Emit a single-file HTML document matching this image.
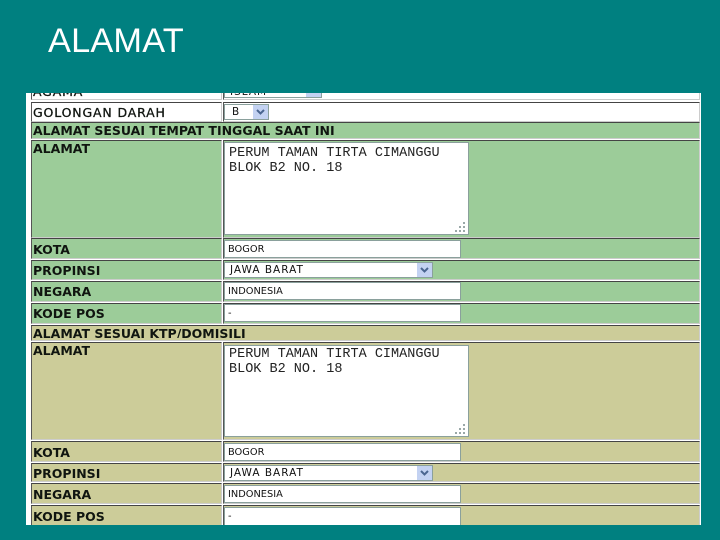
<!DOCTYPE html>
<html><head><meta charset="utf-8">
<style>
html,body{margin:0;padding:0}
body{width:720px;height:540px;background:#008080;position:relative;overflow:hidden;font-family:"DejaVu Sans","Liberation Sans",sans-serif}
#t{position:absolute;left:48px;top:22px;font:34.3px/38px "Liberation Sans",sans-serif;color:#fff;letter-spacing:.2px}
#p{position:absolute;left:26px;top:93px;width:675px;height:432px;background:#fff;overflow:hidden;filter:blur(.25px)}
.c{position:absolute;box-sizing:border-box;border-top:1px solid #444;border-left:1px solid #555;border-bottom:1px solid #ccc;border-right:1px solid #ccc}
.g{background:#9ccc99}.k{background:#cccc99}.w{background:#fff}
.l{position:absolute;font-size:12.5px;font-weight:700;color:#101510;white-space:nowrap;overflow:hidden}
.n{font-weight:400;letter-spacing:.85px;-webkit-text-stroke:.3px #101510}
.i{position:absolute;box-sizing:border-box;background:#fff;border:1px solid #8aa09c;font-size:9.8px;line-height:18px;color:#111;padding-left:3px;white-space:nowrap;overflow:hidden}
.s{position:absolute;box-sizing:border-box;background:#fff;border:1px solid #8aa09c;font-size:10.5px;line-height:15px;color:#111;padding-left:5px;letter-spacing:1px;white-space:nowrap;overflow:hidden}
.b{position:absolute;right:0;top:0;bottom:0;width:15px;background:#c3d2f2}
.b svg{position:absolute;left:2px;top:3px}
.a{position:absolute;box-sizing:border-box;background:#fff;border:1px solid #8aa09c;font:13.5px/15px "Liberation Mono",monospace;color:#222;padding:3px 0 0 4px;white-space:pre;overflow:hidden}
.r{position:absolute;width:12px;height:12px;right:1px;bottom:1px}
</style></head><body>
<div id="t">ALAMAT</div>
<div id="p">
<div class="c w" style="left:5px;top:-12px;width:191px;height:19px"></div>
<div class="c w" style="left:197px;top:-12px;width:477px;height:19px"></div>
<div class="l n" style="left:7px;top:-9px;height:14px">AGAMA</div>
<div class="s" style="left:198px;top:-9px;width:98px;height:14px">ISLAM<div class="b"></div></div>

<div class="c w" style="left:5px;top:9px;width:191px;height:20px"></div>
<div class="c w" style="left:197px;top:9px;width:477px;height:20px"></div>
<div class="l n" style="left:7px;top:12px">GOLONGAN DARAH</div>
<div class="s" style="left:198px;top:11px;width:45px;height:16px;padding-left:7px">B<div class="b"><svg width="11" height="9" viewBox="0 0 11 9"><path d="M2 2l3.5 3.5L9 2" fill="none" stroke="#4a6590" stroke-width="2"/></svg></div></div>

<div class="c g" style="left:5px;top:29px;width:669px;height:17px"></div>
<div class="l" style="left:7px;top:30px">ALAMAT SESUAI TEMPAT TINGGAL SAAT INI</div>

<div class="c g" style="left:5px;top:47px;width:191px;height:98px"></div>
<div class="c g" style="left:197px;top:47px;width:477px;height:98px"></div>
<div class="l" style="left:7px;top:48px">ALAMAT</div>
<div class="a" style="left:198px;top:49px;width:245px;height:93px">PERUM TAMAN TIRTA CIMANGGU
BLOK B2 NO. 18<svg class="r" viewBox="0 0 12 12"><path d="M8 1h2v2H8zM4 5h2v2H4zM8 5h2v2H8zM0 9h2v2H0zM4 9h2v2H4zM8 9h2v2H8z" fill="#9aa8a8"/></svg></div>

<div class="c g" style="left:5px;top:145px;width:191px;height:21px"></div>
<div class="c g" style="left:197px;top:145px;width:477px;height:21px"></div>
<div class="l" style="left:7px;top:149px">KOTA</div>
<div class="i" style="left:198px;top:147px;width:237px;height:18px">BOGOR</div>

<div class="c g" style="left:5px;top:167px;width:191px;height:20px"></div>
<div class="c g" style="left:197px;top:167px;width:477px;height:20px"></div>
<div class="l" style="left:7px;top:170px">PROPINSI</div>
<div class="s" style="left:198px;top:169px;width:209px;height:16px">JAWA BARAT<div class="b"><svg width="11" height="9" viewBox="0 0 11 9"><path d="M2 2l3.5 3.5L9 2" fill="none" stroke="#4a6590" stroke-width="2"/></svg></div></div>

<div class="c g" style="left:5px;top:188px;width:191px;height:21px"></div>
<div class="c g" style="left:197px;top:188px;width:477px;height:21px"></div>
<div class="l" style="left:7px;top:191px">NEGARA</div>
<div class="i" style="left:198px;top:189px;width:237px;height:18px">INDONESIA</div>

<div class="c g" style="left:5px;top:210px;width:191px;height:21px"></div>
<div class="c g" style="left:197px;top:210px;width:477px;height:21px"></div>
<div class="l" style="left:7px;top:213px">KODE POS</div>
<div class="i" style="left:198px;top:211px;width:237px;height:18px">-</div>

<div class="c k" style="left:5px;top:232px;width:669px;height:16px"></div>
<div class="l" style="left:7px;top:233px;height:12px">ALAMAT SESUAI KTP/DOMISILI</div>

<div class="c k" style="left:5px;top:249px;width:191px;height:98px"></div>
<div class="c k" style="left:197px;top:249px;width:477px;height:98px"></div>
<div class="l" style="left:7px;top:250px">ALAMAT</div>
<div class="a" style="left:198px;top:252px;width:245px;height:92px;padding-top:1px">PERUM TAMAN TIRTA CIMANGGU
BLOK B2 NO. 18<svg class="r" viewBox="0 0 12 12"><path d="M8 1h2v2H8zM4 5h2v2H4zM8 5h2v2H8zM0 9h2v2H0zM4 9h2v2H4zM8 9h2v2H8z" fill="#9aa8a8"/></svg></div>

<div class="c k" style="left:5px;top:348px;width:191px;height:21px"></div>
<div class="c k" style="left:197px;top:348px;width:477px;height:21px"></div>
<div class="l" style="left:7px;top:352px">KOTA</div>
<div class="i" style="left:198px;top:350px;width:237px;height:18px">BOGOR</div>

<div class="c k" style="left:5px;top:370px;width:191px;height:19px"></div>
<div class="c k" style="left:197px;top:370px;width:477px;height:19px"></div>
<div class="l" style="left:7px;top:373px">PROPINSI</div>
<div class="s" style="left:198px;top:372px;width:209px;height:16px">JAWA BARAT<div class="b"><svg width="11" height="9" viewBox="0 0 11 9"><path d="M2 2l3.5 3.5L9 2" fill="none" stroke="#4a6590" stroke-width="2"/></svg></div></div>

<div class="c k" style="left:5px;top:390px;width:191px;height:21px"></div>
<div class="c k" style="left:197px;top:390px;width:477px;height:21px"></div>
<div class="l" style="left:7px;top:394px">NEGARA</div>
<div class="i" style="left:198px;top:392px;width:237px;height:18px">INDONESIA</div>

<div class="c k" style="left:5px;top:412px;width:191px;height:24px"></div>
<div class="c k" style="left:197px;top:412px;width:477px;height:24px"></div>
<div class="l" style="left:7px;top:416px">KODE POS</div>
<div class="i" style="left:198px;top:414px;width:237px;height:22px">-</div>
</div>
</body></html>
